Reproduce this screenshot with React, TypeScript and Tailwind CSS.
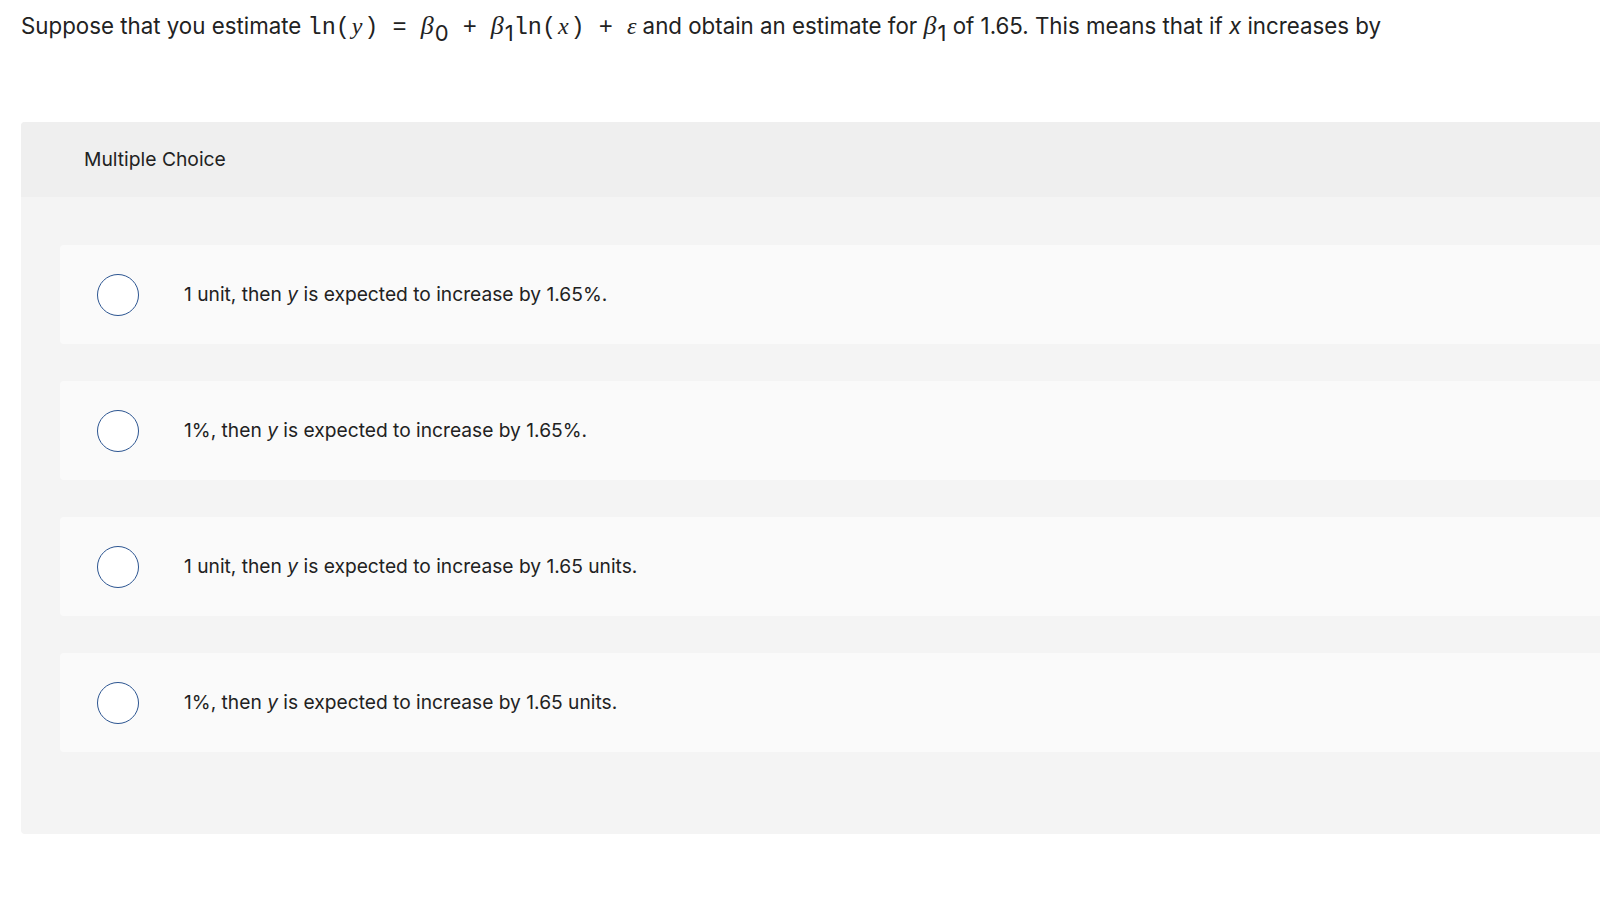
const options = [
  { lead: "1 unit, then", tail: "is expected to increase by 1.65%." },
  { lead: "1%, then", tail: "is expected to increase by 1.65%." },
  { lead: "1 unit, then", tail: "is expected to increase by 1.65 units." },
  { lead: "1%, then", tail: "is expected to increase by 1.65 units." },
];

const mono = "font-['Liberation_Mono',monospace] text-[23.5px] whitespace-pre";
const serifI = "font-['Liberation_Serif',serif] italic";

// italic variable that takes one mono cell
const MonoVar = ({ v }: { v: string }) => (
  <span className={`${serifI} inline-block w-[0.6em] text-center text-[24px]`}>{v}</span>
);

const Beta = ({ sub }: { sub: string }) => (
  <>
    <span className={`${serifI} text-[26px]`}>β</span>
    <sub className="text-[22px] relative top-[0.3em] bottom-auto ml-[1px]">{sub}</sub>
  </>
);

const App = () => {
  return (
    <div className="min-h-screen bg-white text-[#222] font-['Inter',sans-serif]">
      {/* Question */}
      <p className="pl-[21px] pt-[10px] text-[22.3px] leading-[32px] whitespace-nowrap">
        Suppose that you estimate{" "}
        <span className={mono}>
          ln(<MonoVar v="y" />){" = "}
        </span>
        <Beta sub="0" />
        <span className={mono}>{" + "}</span>
        <Beta sub="1" />
        <span className={mono}>
          ln(<MonoVar v="x" />){" + "}
        </span>
        <span className={`${serifI} text-[24px]`}>ε</span> and obtain an estimate for{" "}
        <Beta sub="1" /> of 1.65. This means that if{" "}
        <span className="italic">x</span> increases by
      </p>

      {/* Multiple choice panel */}
      <div className="mt-[78px] ml-[21px] rounded-l-[4px] bg-[#f4f4f4] overflow-hidden">
        <div className="h-[75px] bg-[#efefef] pl-[63px] flex items-center text-[19.3px]">
          Multiple Choice
        </div>
        <div className="pl-[39px] pt-[48px] pb-[82px] flex flex-col gap-[37px]">
          {options.map((opt, i) => (
            <div
              key={i}
              className="h-[99px] bg-[#fafafa] rounded-l-[4px] flex items-center pl-[37px]"
            >
              <div className="w-[42px] h-[42px] rounded-full border-[1.5px] border-[#2c5591] bg-white shrink-0" />
              <span className="ml-[45px] text-[19.2px]">
                {opt.lead} <span className="italic">y</span> {opt.tail}
              </span>
            </div>
          ))}
        </div>
      </div>
    </div>
  );
};

export default App;
